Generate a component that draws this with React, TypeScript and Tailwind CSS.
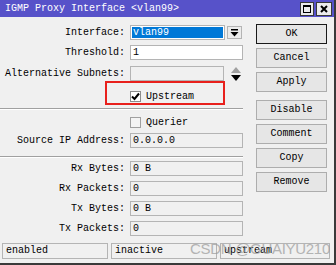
import React from "react";

function Label({ children }: { children: React.ReactNode }) {
  return <div className="w-[125px] text-right whitespace-pre leading-none">{children}</div>;
}

function Field({ w, children, white }: { w: string; children?: React.ReactNode; white?: boolean }) {
  return (
    <div
      className={`ml-[5px] h-[15px] border border-[#b4b4b4] flex items-center pl-[2px] leading-none ${w} ${white ? "bg-white" : "bg-[#f0f0f0]"}`}
    >
      {children}
    </div>
  );
}

function Row({ label, mt, children }: { label: string; mt: string; children: React.ReactNode }) {
  return (
    <div className={`flex items-center h-[15px] ${mt}`}>
      <Label>{label}</Label>
      {children}
    </div>
  );
}

function Sep({ mt }: { mt: string }) {
  return (
    <div className={`${mt} w-[243px]`}>
      <div className="h-px bg-[#a0a0a0]" />
      <div className="h-px bg-white" />
    </div>
  );
}

function Btn({ label, primary, mt }: { label: string; primary?: boolean; mt?: string }) {
  return (
    <div
      className={`h-[20px] w-[71px] flex items-center justify-center leading-none bg-[#e6e6e6] border ${
        primary ? "border-[#1a1a1a]" : "border-[#adadad]"
      } ${mt ?? ""}`}
    >
      {label}
    </div>
  );
}

function StatusBox({ w, text }: { w: string; text: string }) {
  return (
    <div className={`${w} h-[16px] border border-[#b4b4b4] flex items-center pl-[3px] leading-none`}>{text}</div>
  );
}

export default function App() {
  return (
    <div className="w-[336px] h-[265px] bg-[#f0f0f0] font-['Liberation_Mono',monospace] text-[10px] text-black relative overflow-hidden border-r-2 border-b-2 border-[#3a3a3a]">
      {/* Title bar */}
      <div className="h-[17px] bg-[#5752c9] flex items-center pl-[5px] text-white">
        <span className="leading-none">IGMP Proxy Interface &lt;vlan99&gt;</span>
        <div className="ml-auto flex items-center gap-[2px] mr-[2px] mt-[1px]">
          <div className="w-[14px] h-[14px] bg-[#ececec] border border-[#3a3a3a] flex items-center justify-center">
            <div className="w-[8px] h-[8px] border border-black border-t-2" />
          </div>
          <div className="w-[16px] h-[14px] bg-[#ececec] border border-[#3a3a3a] flex items-center justify-center">
            <svg width="8" height="8" viewBox="0 0 8 8">
              <path d="M1 1 L7 7 M7 1 L1 7" stroke="#000" strokeWidth="2" />
            </svg>
          </div>
        </div>
      </div>

      <div className="flex">
        {/* Left column */}
        <div className="w-[243px] pt-[8px] flex flex-col">
          <Row label="Interface:" mt="">
            <Field w="w-[95px]" white>
              <div className="bg-[#0078d7] text-white h-[11px] flex-1 mr-[1px] flex items-center pl-[1px] -ml-[1px]">vlan99</div>
            </Field>
            <div className="ml-[2px] w-[15px] h-[13px] border border-[#b4b4b4] bg-[#ececec] flex items-center justify-center">
              <svg width="9" height="8" viewBox="0 0 9 8">
                <rect x="1" y="0" width="7" height="1.5" fill="#000" />
                <path d="M0.5 3 L8.5 3 L4.5 7.5 Z" fill="#000" />
              </svg>
            </div>
          </Row>
          <Row label="Threshold:" mt="mt-[5px]">
            <Field w="w-[113px]" white>
              1
            </Field>
          </Row>
          <Row label="Alternative Subnets:" mt="mt-[6px]">
            <Field w="w-[94px]" />
            <div className="ml-[7px] flex flex-col items-center gap-[2px]">
              <svg width="10" height="6" viewBox="0 0 10 6">
                <path d="M0 6 L10 6 L5 0 Z" fill="#a0a0a0" />
              </svg>
              <svg width="10" height="6" viewBox="0 0 10 6">
                <path d="M0 0 L10 0 L5 6 Z" fill="#000" />
              </svg>
            </div>
          </Row>
          <div className="h-[27px] pt-[10px] flex items-start pl-[130px]">
            <div className="w-[11px] h-[11px] bg-white border border-[#8c8c8c] flex items-center justify-center">
              <svg width="9" height="9" viewBox="0 0 9 9">
                <path d="M1 4.5 L3.5 7 L8 1.5" stroke="#000" strokeWidth="2" fill="none" />
              </svg>
            </div>
            <span className="ml-[5px] leading-none mt-[1px]">Upstream</span>
          </div>
          <Sep mt="" />
          <div className="mt-[7px] h-[11px] flex items-center pl-[130px]">
            <div className="w-[11px] h-[11px] bg-[#f4f4f4] border border-[#a0a0a0]" />
            <span className="ml-[5px] leading-none">Querier</span>
          </div>
          <Row label="Source IP Address:" mt="mt-[5px]">
            <Field w="w-[113px]">0.0.0.0</Field>
          </Row>
          <Sep mt="mt-[8px]" />
          <Row label="Rx Bytes:" mt="mt-[3px]">
            <Field w="w-[113px]">0 B</Field>
          </Row>
          <Row label="Rx Packets:" mt="mt-[5px]">
            <Field w="w-[113px]">0</Field>
          </Row>
          <Row label="Tx Bytes:" mt="mt-[5px]">
            <Field w="w-[113px]">0 B</Field>
          </Row>
          <Row label="Tx Packets:" mt="mt-[5px]">
            <Field w="w-[113px]">0</Field>
          </Row>
        </div>

        {/* Right column */}
        <div className="ml-[13px] pt-[7px] flex flex-col gap-[4px]">
          <Btn label="OK" primary />
          <Btn label="Cancel" />
          <Btn label="Apply" />
          <Btn label="Disable" mt="mt-[4px]" />
          <Btn label="Comment" />
          <Btn label="Copy" />
          <Btn label="Remove" />
        </div>
      </div>

      {/* Status bar */}
      <div className="mt-[7px] pl-[2px] flex gap-[3px]">
        <StatusBox w="w-[106px]" text="enabled" />
        <StatusBox w="w-[106px]" text="inactive" />
        <StatusBox w="w-[110px]" text="upstream" />
      </div>

      {/* Red annotation box */}
      <div className="absolute left-[105px] top-[81px] w-[120px] h-[24px] border-2 border-[#e8201c]" />

      {/* Watermark */}
      <div className="absolute left-[190px] top-[241px] font-['Liberation_Sans',sans-serif] text-[15px] text-[#9a9a9a] opacity-70 tracking-[-0.3px] leading-none">
        CSDN @GUAIYU210
      </div>
    </div>
  );
}
